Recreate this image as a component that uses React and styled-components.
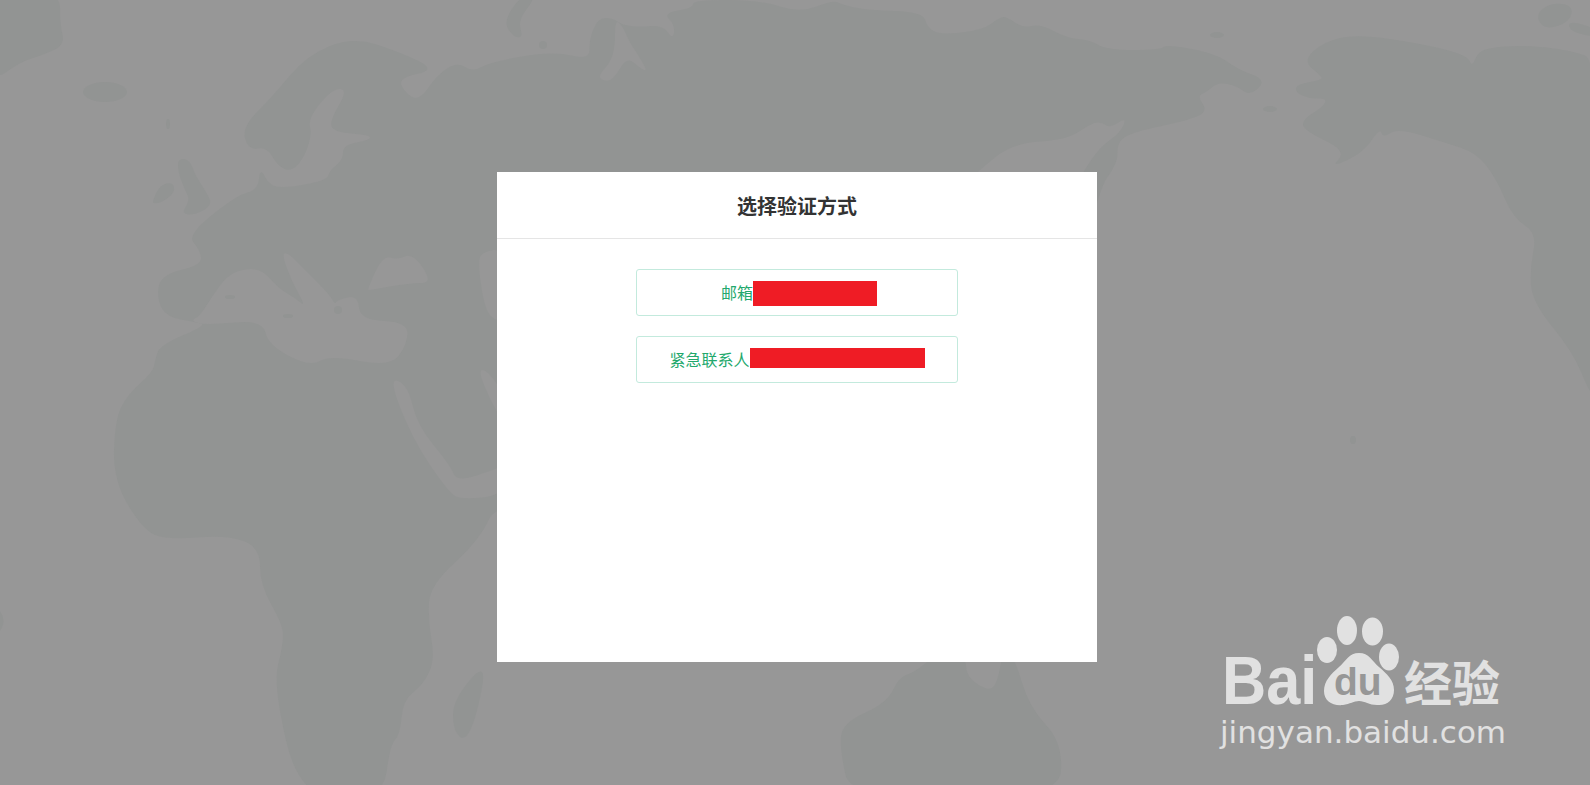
import React from 'react'
import styled, { createGlobalStyle } from 'styled-components'

const OCEAN = '#979797'
const LAND = '#929493'
const MARK = '#e1e1e1'

const GlobalStyle = createGlobalStyle`
  html, body {
    margin: 0;
    padding: 0;
    background: ${OCEAN};
  }
`

const Page = styled.div`
  position: relative;
  height: 785px;
  overflow: hidden;
  padding: 172px 0 0 4px;
  box-sizing: border-box;
  background: ${OCEAN};
  font-family: "Noto Sans CJK SC", "Liberation Sans", sans-serif;
`

const MapLayer = styled.svg`
  position: absolute;
  left: 0;
  top: 0;
`

const Modal = styled.section`
  position: relative;
  width: 600px;
  height: 490px;
  margin: 0 auto;
  background: #fff;
`

const ModalHeader = styled.header`
  display: flex;
  align-items: center;
  justify-content: center;
  height: 67px;
  padding-top: 2px;
  box-sizing: border-box;
  border-bottom: 1px solid #e5e5e5;
`

const Title = styled.h1`
  margin: 0;
  color: #333;
  font-size: 20px;
  font-weight: 700;
  line-height: 28px;
`

const Methods = styled.div`
  display: flex;
  flex-direction: column;
  align-items: center;
  gap: 20px;
  padding-top: 30px;
`

const Method = styled.button`
  display: flex;
  align-items: center;
  justify-content: center;
  width: 322px;
  height: 47px;
  padding: 0 0 2px ${p => p.$inset}px;
  box-sizing: border-box;
  border: 1px solid #c3eadd;
  border-radius: 3px;
  background: #fff;
  color: #22a86c;
  font-family: inherit;
  font-size: 16px;
`

const Redacted = styled.span`
  display: block;
  width: ${p => p.$w}px;
  height: ${p => p.$h}px;
  margin: ${p => p.$top || 0}px 0 ${p => p.$bottom || 0}px;
  background: #ef1c25;
`

const Watermark = styled.div`
  position: absolute;
  left: 1220px;
  top: 614px;
  width: 300px;
  color: ${MARK};
`

const MarkRow = styled.div`
  display: flex;
  align-items: flex-start;
`

const Bai = styled.span`
  display: block;
  width: 95px;
  margin: 32px 0 0 2px;
  font-family: "Liberation Sans", sans-serif;
  font-size: 68px;
  font-weight: 700;
  line-height: 68px;
  transform: scaleX(0.9);
  transform-origin: left center;
`

const Paw = styled.svg`
  display: block;
  flex: none;
`

const Jingyan = styled.span`
  display: block;
  margin: 36px 0 0 3px;
  font-size: 48px;
  font-weight: 700;
  line-height: 60px;
  white-space: nowrap;
`

const Domain = styled.div`
  margin-top: -2px;
  font-family: "DejaVu Sans", sans-serif;
  font-size: 31px;
  line-height: 40px;
  white-space: nowrap;
`

// closed smooth outline through the midpoints of a traced polygon
const smooth = pts => {
  const mid = (a, b) => [(a[0] + b[0]) / 2, (a[1] + b[1]) / 2]
  const start = mid(pts[pts.length - 1], pts[0])
  let d = `M${start[0]} ${start[1]}`
  pts.forEach((p, i) => {
    const m = mid(p, pts[(i + 1) % pts.length])
    d += `Q${p[0]} ${p[1]} ${m[0]} ${m[1]}`
  })
  return d + 'Z'
}

const landShapes = [
  // Eurasia and Africa, the middle is under the modal
  [[242,127],[272,97],[307,55],[353,37],[400,52],[437,70],[397,78],[407,95],[420,100],[437,75],[457,62],[473,72],[490,62],[553,51],[590,60],[589,40],[598,18],[613,18],[622,25],[640,27],[663,25],[673,40],[675,25],[663,13],[693,8],[693,0],[760,0],[800,13],[833,0],[843,5],[867,10],[923,12],[927,27],[940,35],[983,30],[1000,17],[1007,17],[1023,28],[1040,24],[1067,38],[1090,40],[1107,50],[1160,50],[1167,44],[1217,54],[1237,69],[1267,80],[1250,96],[1237,86],[1218,82],[1207,92],[1197,96],[1208,111],[1190,120],[1133,132],[1117,142],[1118,163],[1097,191],[1050,400],[500,495],[480,540],[430,585],[428,620],[435,660],[423,685],[403,700],[400,735],[390,745],[383,800],[300,800],[273,685],[283,645],[283,625],[260,585],[260,547],[227,535],[167,540],[143,530],[113,480],[115,420],[127,395],[153,372],[155,360],[160,345],[207,325],[195,322],[167,317],[157,300],[160,275],[202,265],[200,250],[187,235],[237,195],[258,190],[260,167],[270,187],[293,187],[327,180],[330,170],[343,160],[343,145],[370,140],[370,135],[333,132],[330,120],[348,90],[333,88],[308,118],[312,135],[303,160],[290,172],[277,165],[267,147],[248,150]],
  // Greenland, Great Britain, Ireland
  [[-10,-10],[60,-10],[60,25],[65,45],[43,55],[20,62],[-10,84]],
  [[178,158],[190,160],[195,175],[205,190],[213,205],[195,215],[181,214],[190,200],[185,190],[178,172]],
  [[153,200],[160,185],[173,182],[175,192],[163,202],[153,204]],
  // Madagascar, Australia, South America's edge
  [[487,660],[453,700],[453,730],[465,742],[477,715]],
  [[842,723],[887,703],[899,677],[915,672],[935,655],[966,655],[966,677],[990,692],[998,680],[1002,655],[1014,655],[1029,707],[1063,743],[1059,800],[851,800],[840,750]],
  [[-10,600],[8,620],[-10,645]],
  // North America and the far corner
  [[1303,61],[1323,42],[1357,34],[1423,44],[1467,55],[1472,67],[1477,54],[1487,48],[1523,45],[1570,50],[1600,61],[1600,400],[1590,394],[1573,352],[1532,302],[1530,268],[1537,233],[1513,218],[1497,180],[1477,153],[1443,142],[1398,128],[1383,138],[1380,128],[1363,153],[1330,168],[1347,151],[1303,130],[1303,119],[1323,107],[1327,98],[1310,99],[1295,92],[1297,84],[1323,80],[1320,75]],
  [[1535,15],[1550,3],[1573,5],[1570,22],[1545,30]],
  [[1568,20],[1600,30],[1600,38],[1570,32]],
  [[503,23],[515,38],[523,37],[518,20],[537,-4],[520,-4]]
]

const seaShapes = [
  // Mediterranean
  [[190,321],[200,316],[213,295],[230,272],[260,267],[278,288],[295,298],[306,307],[292,282],[282,255],[287,252],[300,265],[330,295],[335,305],[337,300],[358,295],[360,320],[408,322],[407,345],[390,367],[330,355],[310,367],[268,345],[263,320],[207,325]],
  // Black Sea, Red Sea and Gulf of Aden, Persian Gulf, Caspian
  [[367,290],[383,255],[397,260],[413,253],[433,283],[410,283],[370,290]],
  [[388,377],[408,385],[417,425],[450,465],[457,482],[493,470],[505,465],[505,495],[460,500],[447,490],[413,440]],
  [[478,370],[487,370],[505,395],[505,425],[490,400]],
  [[478,262],[482,252],[505,248],[505,322],[490,318],[483,300]],
  // Kara Sea hook and the wedge south of Siberia
  [[597,77],[607,82],[615,77],[627,57],[640,68],[648,72],[637,53],[630,43],[622,25],[615,20],[615,47],[610,63]],
  [[960,190],[977,172],[1013,143],[1067,140],[1093,122],[1103,123],[1110,128],[1127,117],[1120,133],[1100,147],[1083,172],[1075,190]]
]

const landSpots = [
  [105, 92, 22, 10], [168, 124, 2, 5], [230, 297, 5, 2], [288, 316, 5, 2], [338, 310, 4, 4],
  [543, 45, 4, 4], [1217, 35, 7, 3], [1270, 109, 7, 3], [1353, 440, 3, 4]
]

const WorldMap = () => (
  <MapLayer width="1590" height="785" viewBox="0 0 1590 785" aria-hidden="true">
    {landShapes.map((s, i) => <path key={i} d={smooth(s)} fill={LAND} />)}
    {seaShapes.map((s, i) => <path key={i} d={smooth(s)} fill={OCEAN} />)}
    {landSpots.map(([cx, cy, rx, ry]) => (
      <ellipse key={cx} cx={cx} cy={cy} rx={rx} ry={ry} fill={LAND} />
    ))}
  </MapLayer>
)

const PawMark = () => (
  <Paw width="84" height="94" viewBox="0 0 84 94" fill={MARK}>
    <ellipse cx="30" cy="16.5" rx="10" ry="14.5" />
    <ellipse cx="55.5" cy="17.5" rx="10.5" ry="14" />
    <ellipse cx="10" cy="36" rx="10" ry="13" />
    <ellipse cx="72" cy="43" rx="10" ry="13.5" />
    <path d="M42 39C32 39 29 47 22 53C14 60 7 67 7 77C7 87 15 92 26 91C33 90 37 87 42 87C48 87 52 91 60 91C70 92 77 86 77 76C77 66 70 60 62 53C55 47 52 39 42 39Z" />
    <text x="17" y="81" fontFamily="Liberation Sans, sans-serif" fontSize="39" fontWeight="700" fill={OCEAN}>du</text>
  </Paw>
)

const App = () => (
  <Page>
    <GlobalStyle />
    <WorldMap />
    <Modal>
      <ModalHeader>
        <Title>选择验证方式</Title>
      </ModalHeader>
      <Methods>
        <Method $inset={4}>
          邮箱
          <Redacted $w={124} $h={25} $top={4} />
        </Method>
        <Method $inset={0}>
          紧急联系人
          <Redacted $w={175} $h={20} $bottom={2} />
        </Method>
      </Methods>
    </Modal>
    <Watermark>
      <MarkRow>
        <Bai>Bai</Bai>
        <PawMark />
        <Jingyan>经验</Jingyan>
      </MarkRow>
      <Domain>jingyan.baidu.com</Domain>
    </Watermark>
  </Page>
)

export default App
